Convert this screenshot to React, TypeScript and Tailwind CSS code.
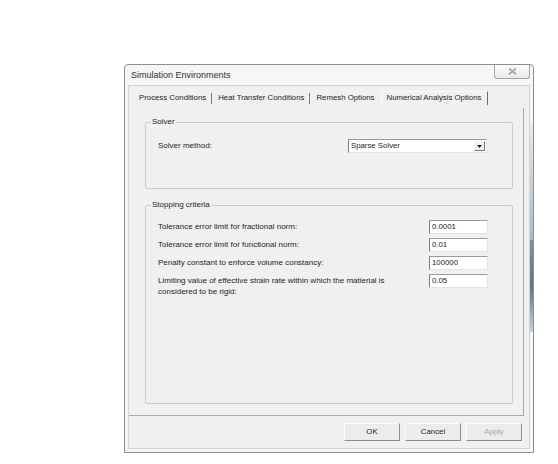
const TABS = ["Process Conditions", "Heat Transfer Conditions", "Remesh Options"] as const;

const CRITERIA = [
  { label: "Tolerance error limit for fractional norm:", value: "0.0001" },
  { label: "Tolerance error limit for functional norm:", value: "0.01" },
  { label: "Penalty constant to enforce volume constancy:", value: "100000" },
] as const;

function TextBox({ value }: { value: string }) {
  return (
    <div className="w-[59px] h-[14px] shrink-0 bg-white border border-t-[#9a9a9a] border-l-[#7d7d7d] border-r-[#e3e3e3] border-b-[#e3e3e3] pl-[2px] text-[7.8px] leading-[12px] text-[#222]">
      {value}
    </div>
  );
}

function Button({ label, disabled }: { label: string; disabled?: boolean }) {
  return (
    <div
      className={
        "w-[56px] h-[18px] flex items-center justify-center bg-[#ececec] border border-t-[#fbfbfb] border-l-[#fbfbfb] border-r-[#8c8c8c] border-b-[#8c8c8c] text-[7.8px] " +
        (disabled ? "text-[#a8a8a8]" : "text-[#222]")
      }
    >
      {label}
    </div>
  );
}

export default function App() {
  return (
    <div className="w-[558px] h-[464px] bg-white pt-[64px] pl-[124px] font-['Liberation_Sans',Arial,sans-serif] text-[#1e1e1e]">
      <div className="w-[410px] h-[389px] flex flex-col border border-[#8e8e8e] rounded-t-[4px] bg-[#f6f6f6]">
        {/* title bar */}
        <div className="h-[20px] flex items-start">
          <span className="pl-[6px] pt-[5px] text-[9px] leading-[11px] text-[#2d3238]">Simulation Environments</span>
          <div className="ml-auto mr-[3px] w-[36px] h-[14px] flex items-center justify-center border border-t-0 border-[#a4a4a4] rounded-b-[3px] bg-gradient-to-b from-[#fdfdfd] to-[#e9e9e9]">
            <svg width="9" height="7" viewBox="0 0 9 7" fill="none" stroke="#8d8d8d" strokeWidth="1.1">
              <path d="M1 0.5 L8 6.5 M8 0.5 L1 6.5" />
              <path d="M2.5 0.5 L9 6 M6.5 0.5 L0 6" stroke="#c4c4c4" strokeWidth="0.7" />
            </svg>
          </div>
        </div>

        <div className="flex-1 flex pl-[3px] pb-[3px]">
          <div className="flex-1 flex flex-col border border-[#d2d2d2] bg-[#f0f0f0]">
            {/* tab strip */}
            <div className="h-[22px] flex items-start pt-[5px] pl-[4px] text-[7.8px]">
              {TABS.map((t, i) => (
                <div key={t} className="flex items-center h-[14px]">
                  <span className="pl-[6px] pr-[5px] leading-[14px] whitespace-nowrap">{t}</span>
                  {i < 2 && <span className="w-px h-[11px] bg-[#7c7c7c]" />}
                </div>
              ))}
              <div className="ml-[1px] h-[14px] pl-[5px] pr-[6px] border-t border-l border-r border-t-[#fafafa] border-l-[#fafafa] border-r-[#6f6f6f] leading-[11px] whitespace-nowrap">
                Numerical Analysis Options
              </div>
            </div>

            {/* tab page */}
            <div className="h-[308px] mr-[5px] flex flex-col border-r border-b border-[#ababab] pt-[9px] pl-[16px] pr-[10px] pb-[11px] text-[8px]">
              <fieldset className="border border-[#cccccc] rounded-[2px]">
                <legend className="ml-[5px] px-[1px] leading-[10px]">Solver</legend>
                <div className="flex items-center pt-[12px] pb-[35px] pl-[12px] pr-[25px]">
                  <span className="flex-1 leading-[14px]">Solver method:</span>
                  <div className="w-[139px] h-[14px] flex items-center bg-white border border-t-[#9a9a9a] border-l-[#7d7d7d] border-r-[#e3e3e3] border-b-[#e3e3e3]">
                    <span className="flex-1 pl-[2px] text-[7.8px] leading-[12px]">Sparse Solver</span>
                    <div className="w-[11px] h-[10px] mr-[1px] flex items-center justify-center bg-[#f0f0f0] border border-t-[#fafafa] border-l-[#fafafa] border-r-[#777] border-b-[#777]">
                      <svg width="5" height="3" viewBox="0 0 5 3">
                        <path d="M0 0 H5 L2.5 3 Z" fill="#222" />
                      </svg>
                    </div>
                  </div>
                </div>
              </fieldset>

              <fieldset className="flex-1 mt-[11px] border border-[#cccccc] rounded-[2px]">
                <legend className="ml-[5px] px-[1px] leading-[10px]">Stopping criteria</legend>
                <div className="flex flex-col gap-[4px] pt-[10px] pl-[12px] pr-[24px]">
                  {CRITERIA.map((c) => (
                    <div key={c.label} className="flex items-center h-[14px]">
                      <span className="flex-1 leading-[14px]">{c.label}</span>
                      <TextBox value={c.value} />
                    </div>
                  ))}
                  <div className="flex items-start">
                    <span className="flex-1 leading-[11px] pt-[1px]">
                      Limiting value of effective strain rate within which the matierial is
                      <br />
                      considered to be rigid:
                    </span>
                    <TextBox value="0.05" />
                  </div>
                </div>
              </fieldset>
            </div>

            {/* buttons */}
            <div className="flex justify-end gap-[5px] pt-[7px] pr-[7px]">
              <Button label="OK" />
              <Button label="Cancel" />
              <Button label="Apply" disabled />
            </div>
          </div>

          {/* right frame edge with glass reflection */}
          <div className="w-[3px] flex flex-col">
            <div className="mt-[38px] h-[117px] bg-gradient-to-b from-[#e6ecf1] to-[#a9b9c7]" />
            <div className="h-[92px] bg-gradient-to-b from-[#7d91a4] via-[#5f7488] to-[#c6d4e0]" />
          </div>
        </div>
      </div>
    </div>
  );
}
